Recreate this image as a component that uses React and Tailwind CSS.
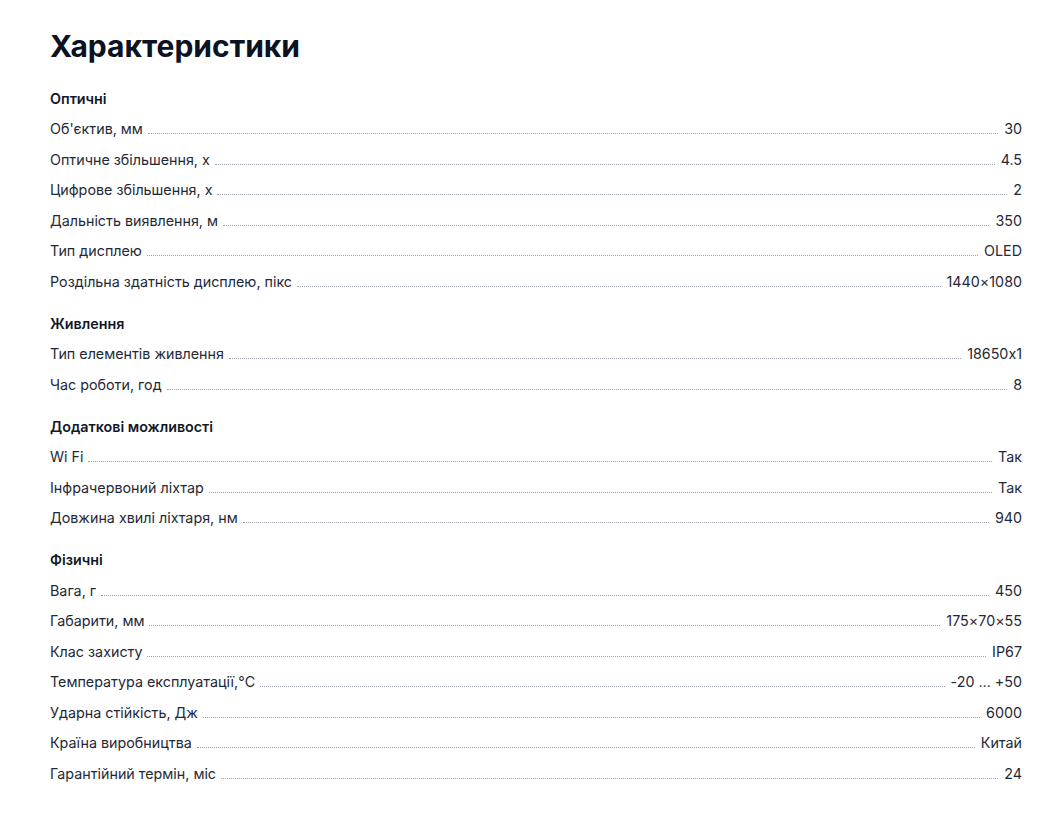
const sections = [
  {
    title: "Оптичні",
    rows: [
      ["Об'єктив, мм", "30"],
      ["Оптичне збільшення, x", "4.5"],
      ["Цифрове збільшення, x", "2"],
      ["Дальність виявлення, м", "350"],
      ["Тип дисплею", "OLED"],
      ["Роздільна здатність дисплею, пікс", "1440×1080"],
    ],
  },
  {
    title: "Живлення",
    rows: [
      ["Тип елементів живлення", "18650x1"],
      ["Час роботи, год", "8"],
    ],
  },
  {
    title: "Додаткові можливості",
    rows: [
      ["Wi Fi", "Так"],
      ["Інфрачервоний ліхтар", "Так"],
      ["Довжина хвилі ліхтаря, нм", "940"],
    ],
  },
  {
    title: "Фізичні",
    rows: [
      ["Вага, г", "450"],
      ["Габарити, мм", "175×70×55"],
      ["Клас захисту", "IP67"],
      ["Температура експлуатації,°C", "-20 ... +50"],
      ["Ударна стійкість, Дж", "6000"],
      ["Країна виробництва", "Китай"],
      ["Гарантійний термін, міс", "24"],
    ],
  },
];

export default function App() {
  return (
    <div
      className="min-h-screen bg-white pl-[50px] pr-[41px] pt-[28px] [font-feature-settings:'calt'_0]"
      style={{ fontFamily: "Inter, 'Noto Sans', sans-serif" }}
    >
      <h1 className="text-[30px] leading-[36px] font-bold text-[#0b1222] mb-[19px]">
        Характеристики
      </h1>
      <div className="flex flex-col gap-[11.5px]">
        {sections.map((section) => (
          <div key={section.title}>
            <div className="h-[30.5px] flex items-center text-[14.3px] font-semibold text-[#111827]">
              {section.title}
            </div>
            {section.rows.map(([label, value]) => (
              <div
                key={label}
                className="h-[30.5px] flex items-center text-[14.3px] text-[#1f2937]"
              >
                <div className="flex items-baseline w-full">
                  <span className="whitespace-nowrap">{label}</span>
                  <div className="flex-1 ml-[5px] mr-[6px] mb-[2px] border-b border-dotted border-[#9ca3af]" />
                  <span className="whitespace-nowrap">{value}</span>
                </div>
              </div>
            ))}
          </div>
        ))}
      </div>
    </div>
  );
}
